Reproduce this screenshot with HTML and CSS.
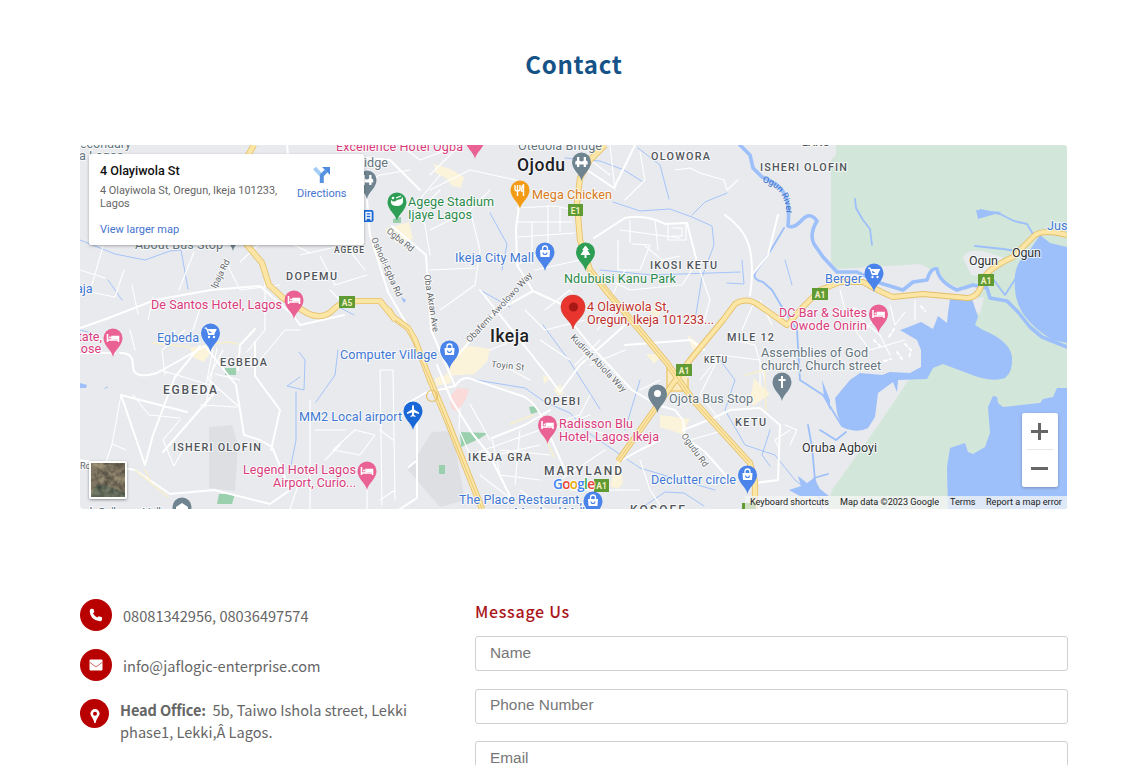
FILE: index.html
```html
<!DOCTYPE html>
<html lang="en">
<head>
<meta charset="utf-8">
<title>Contact</title>
<link rel="stylesheet" href="styles.css">
</head>
<body>
<main class="page">
<h1 class="title">Contact</h1>
<section class="map">
<svg class="map-canvas" viewBox="80 145 987 364" width="987" height="364">
<defs>
<path id="pin" d="M0 19C-1.2 12-9.5 8-9.5 0A9.5 9.5 0 0 1 9.5 0C9.5 8 1.2 12 0 19Z"/>
<g id="bed" fill="none" stroke="#fff" stroke-width="1.6"><path d="M-5.5-4V4M-5.5 2H5.5V4M5.5 2V-1.5H-1V1.5"/><circle cx="-3" cy="-.6" r="1" fill="#fff" stroke="none"/><path d="M-.5 0H5" stroke-width="2"/></g>
<g id="bag"><path d="M-5-2H5L4.5 5H-4.5Z" fill="#fff"/><path d="M-2.5-2V-3.5A2.5 2.5 0 0 1 2.5-3.5V-2" fill="none" stroke="#fff" stroke-width="1.3"/><path d="M-2 .5A2 2 0 0 0 2 .5" fill="none" stroke="#4a83ea" stroke-width="1.1"/></g>
<g id="cart"><path d="M-6-5H-4L-1.8 1.5H4M-3-3.5H5.5L3.5 .5H-2Z" fill="#fff" stroke="#fff" stroke-width="1.1"/><circle cx="-1.5" cy="4" r="1.2" fill="#fff"/><circle cx="3.5" cy="4" r="1.2" fill="#fff"/></g>
<g id="bridge" fill="#fff"><path d="M-4.500-5H-2.200V-1.500Q0 .5 2.200-1.500V-5H4.500V-1.500L6.200-.5V2.500H4.500V5H2.200V2.500H-2.200V5H-4.500V2.500H-6.200V-.5L-4.500-1.500Z"/></g>
<path id="river-name" d="M762 182Q782 186 786 208L788 228"/>
<filter id="terrain" x="0" y="0" width="1" height="1" color-interpolation-filters="sRGB"><feTurbulence type="fractalNoise" baseFrequency=".15" numOctaves="4" seed="8"/><feColorMatrix values=".5 .2 0 0 .12 .45 .2 0 0 .11 .35 .15 0 0 .11 0 0 0 0 1"/></filter>
</defs>
<rect x="80" y="145" width="987" height="364" fill="#e8eaed"/>
<path d="M209 427L232 425 238 445 235 491 209 488ZM432 432L452 431 465 500 440 507 408 470Z" fill="#dddfe3"/>
<path d="M836 145H1067V509H827L832 490 877 427 910 378 950 340 978 300 980 285 965 290 945 282 938 269 932 270 920 264 837 269 831 262V160L836 155Z" fill="#d2e6da"/>
<path d="M963 258Q966 249 982 251L1003 257 988 277 971 275ZM972 299L984 297 980 314 974 310Z" fill="#e8eaed"/>
<g fill="#9dbffa">
<path d="M900 330L917 340 921 350 921 367 910 373 890 372 882 375 860 373 850 380 835 398 837 413 842 427Q857 434 868 428L875 417 878 393 893 382 897 392 898 380 927 379 933 368 943 364 967 373Q990 383 1005 378 1013 372 1012 357 1010 341 983 330L975 325 978 317 972 299H950L948 313 947 323 938 316 933 329 921 322 906 328Z"/>
<path d="M1040 235L1050 243 1067 247V343L1053 340Q1035 330 1024 315 1013 300 1015 275 1017 260 1030 250Z"/>
<path d="M1067 388H1057L1053 397 1043 399 1040 403 1003 407 998 403 997 397 993 396 988 407 990 433 985 447 973 454 968 452 965 443 950 448 947 467 948 509H1067Z"/>
<path d="M976 210L1002 212 978 219ZM80 383L87 385 86 388H80ZM103 389L108 386 107 388ZM401 297L406 300 404 303ZM789 490L801 486 798 476 807 483 814 478 820 489 829 496H800ZM822 380L830 400 830 410 824 396Z"/>
</g>
<g fill="none" stroke="#9dbffa" stroke-linecap="round" stroke-linejoin="round">
<path d="M740 145L750 155 753 168 762 177Q780 184 785 195T788 226Q794 229 802 220T817 221Q809 234 814 244L823 257 837 272 857 272 880 283 903 290 913 282 927 280Q931 267 937 269 939 282 957 290L973 285 987 288 990 298 1007 301 1018 312 1030 327 1042 337 1067 347" stroke-width="3.6"/>
<path d="M980 210L1000 214 1014 221 1027 224 1034 236M975 246L1003 249 1023 252M855 199L856 208 863 220 870 229 872 245M990 275L1005 295 1016 278M784 228L771 250 757 270Q750 279 763 282L772 290 782 307 797 330 800 380 823 395 842 426M808 425L812 447 815 480 822 509M820 430L836 440 846 432M814 478L828 474" stroke-width="1.8"/>
<path d="M80 240L115 254 145 260 170 251 181 250 188 289M613 202L640 211 670 209 692 217 712 226 714 245 702 277 695 320M692 215L705 202 727 193M638 148L660 165 669 199M490 213L507 244 502 270M510 307L480 290M600 270L652 275 740 272M476 380L525 388 545 402 570 413 590 434 640 468 680 480 715 490M543 325L570 362 600 409M640 509L665 492 684 493 704 506M640 380L625 430M720 360L735 380 725 410 745 445 775 455 795 480 820 500M770 430L762 455 770 466M335 305L354 315M299 352L305 360 304 390 287 386 300 377M296 392V440L290 470M316 402L335 375 338 350M108 280L122 300M565 158L600 161 624 170 643 182M727 283L744 284 742 260M785 260L792 285M80 330L88 332" stroke-width=".9"/>
</g>
<path d="M225 368H236V375H225ZM219 494H235L232 504H217ZM460 432L488 433 479 439 461 447ZM529 407L536 406 538 412 531 414ZM439 465H445V474H439ZM393 219L401 217V223H393Z" fill="#9bd0ae"/>
<path d="M450 397L457 388 469 389 466 399 457 412 451 408Z" fill="#fbdada"/>
<path d="M190 348L209 344 214 347 204 362 194 358ZM434 164L450 169 464 177 461 188 452 186 446 178 436 173ZM385 229L409 222 413 239 397 243ZM449 353L470 346 490 349 487 362 474 374 447 376ZM435 378L450 374 451 383 436 386ZM660 415L690 419 682 434 660 427ZM646 354H663L654 364ZM543 375L550 378 544 384ZM554 390L560 384 564 393 558 396ZM619 455L623 483 618 489 610 486ZM644 305L661 312 656 320ZM687 335L702 346 693 350ZM754 378L770 394 753 406 750 400Z" fill="#fbf4da"/>
<g fill="none" stroke="#fff" stroke-linejoin="round" stroke-linecap="round">
<g stroke-width="2">
<path d="M80 328L106 319 155 300 211 290 260 286 293 315 300 325 344 315M287 145L289 165M344 156L390 160 420 190M367 200L370 235 388 292 410 330M392 226L426 255 431 330 455 386M455 386L425 393 406 404M455 386Q463 374 474 380L525 397Q538 405 545 425L556 450 565 470M437 365L451 399 472 433 489 454 511 498M520 200L516 228 517 265 533 291 568 307 574 325 590 345 632 390 657 405M533 291L495 312 458 355M480 290L516 335 546 373 560 392 580 365 625 325M120 353Q133 352 133 366T157 373L205 346 236 385 244 435 260 440 272 447M80 353H115M200 346L175 377 153 435 145 465 121 395 187 412M135 470L170 494 214 490 270 504 290 490 272 447M217 390L163 452M417 420V460L409 467M417 460V498L400 509M594 238L625 218Q645 214 665 224L687 223 697 262M725 215Q746 230 750 250T750 295M752 275L768 255 778 215M657 405L675 410 683 420 685 437 705 452 730 480M683 430L716 417 730 410 760 408 780 425 778 480 748 484M660 440L640 450 622 460M550 410L525 425 492 438M704 350L690 340 652 343 625 345M587 170L614 188 635 145M80 460L135 470M255 329L240 345 238 370M255 342V376L280 410 271 450"/>
</g>
<path stroke-width="1.1" d="M103 246L92 285M80 290L115 297 124 270M80 270L105 278M132 285L138 314M153 297L148 320M179 290L194 252M202 302L193 330M226 262L240 290 280 285M240 262L258 245M265 230L310 253M300 255L345 245 365 270M320 256L335 285 367 275M345 305L330 290M265 281V330L247 352M213 349L205 390M217 348L205 408M223 350L208 379 238 406M165 375L162 350 185 330M130 330L135 350M170 345L175 330M133 395L149 415 180 418M160 370L210 385M121 395L112 444 126 450M112 444L100 480M180 420L163 440 174 466 183 450M200 405L237 407M260 360L285 330H300M240 380L215 374M390 205H425L440 190M340 195L380 175 410 170M400 145L420 160 460 145M430 190L470 170 516 180 520 200M440 175L415 205 425 225 430 255M460 145L430 175M430 230L470 210 490 190M470 210L480 250 475 285 440 310M430 270L475 268M516 208L555 206 575 210M517 222H572M518 237L575 233M548 205V260M532 222V264M560 208V231M535 270L580 260M517 265L545 250M590 160L610 175M620 230L680 238M618 240V270L640 270 650 245 632 244M630 220V242M645 246L662 260 680 256M668 224V240H686V224M672 228H682V236H672M697 262L682 285 630 290 610 280M655 220L658 250M610 145L615 190M640 152L645 180 625 200M600 280L620 305 597 330M625 270L610 300M545 310L570 290 585 310M525 310L545 330 585 320M490 350L515 340M495 361L530 380M540 340L570 360M600 340L575 365M590 365L625 350M640 390L660 380M460 408L459 430M470 404L490 440M492 438L500 475 540 480M520 430L515 485M460 432L470 455 540 430M475 460L540 445M500 450L550 455M480 475L510 498M520 490L545 509M590 395L580 415 548 425M590 415L550 430M590 430L630 440M560 480L605 450M570 490H640M640 460L650 490 660 505M690 440L725 430M700 380L720 355 760 360 760 385M720 355L700 395 720 420M735 340L755 345 765 380M755 300L742 330M760 300L772 325M790 430L775 440 780 450M785 425L797 430 790 445M675 170L690 168 700 173 724 180 727 190 738 180M697 262L710 300 703 325M380 370L382 505M393 370L395 500M380 370H393M380 430L393 440M380 500L395 490M333 450L355 430 375 435 360 455ZM367 480V509M310 400V509M315 430L345 430M325 460L340 445M300 480L290 509M850 310L880 335 890 355M855 330L870 350M890 305L895 325 905 312M915 300V320M840 290L845 310M870 350L905 340"/>
<path stroke-width="1.4" stroke="#f8f0ca" d="M152 343L190 347M209 344L228 342 238 344M135 470L168 497M145 470L150 480M510 424L533 415M545 437L554 457M745 375L765 370 766 410"/>
<path d="M854 308L862 313M872 321L868 327M884 317L889 315M894 329L889 337M905 344L911 350 909 358M897 352L902 359M874 340L880 346M884 361L891 359M921 306L925 311" stroke-width="2" stroke-dasharray="3 3"/>
</g>
<g fill="none" stroke-linejoin="round">
<path d="M667 364V391H688V378" fill="#fbeabd" stroke="#efd28d" stroke-width="2"/>
<g stroke="#e5bf6a" stroke-width="6.200">
<path d="M605 145L590 160 580 178 577 203 580 240 590 270 608 293 637 327 667 363 693 400 720 430 750 463 755 482V509"/>
<path d="M254 145L247 157 232 215 247 245 262 263 269 285 283 298 307 313Q323 321 334 309 341 301 360 301H380L393 317 408 328 415 340 430 380 447 420 482 509M388 309L395 320"/>
<path d="M618 461L657 406 690 360 723 320 735 304Q747 296 760 306L787 325 803 307 820 290 840 282H863Q880 292 893 297L923 294 967 298Q979 298 983 280 987 269 1013 257L1033 237Q1041 228 1067 235" stroke-width="6"/>
</g>
<g stroke="#fce6a6" stroke-width="4.600">
<path d="M605 145L590 160 580 178 577 203 580 240 590 270 608 293 637 327 667 363 693 400 720 430 750 463 755 482V509"/>
<path d="M254 145L247 157 232 215 247 245 262 263 269 285 283 298 307 313Q323 321 334 309 341 301 360 301H380L393 317 408 328 415 340 430 380 447 420 482 509M388 309L395 320"/>
<path d="M618 461L657 406 690 360 723 320 735 304Q747 296 760 306L787 325 803 307 820 290 840 282H863Q880 292 893 297L923 294 967 298Q979 298 983 280 987 269 1013 257L1033 237Q1041 228 1067 235" stroke-width="4.2"/>
</g>
<path d="M395 320L408 329 430 380 482 509M590 270L637 327 667 363 693 400 750 463M618 461L657 406" stroke="#e5bf6a" stroke-width=".8"/>
<circle cx="432" cy="396" r="5.5" stroke="#e5bf6a" stroke-width="1.2"/>
</g>
<g class="shields">
<path d="M339 296H355V308H339ZM568 204H583V216H568ZM812 288H828V300H812ZM978 274H994V286H978ZM676 364H692V376H676ZM594 479H609V492H594ZM742 503H756V509H742Z" fill="#5f9a33"/>
<text x="347" y="305.500">A5</text><text x="575.500" y="213.500">E1</text><text x="820" y="297.500">A1</text><text x="986" y="283.500">A1</text><text x="684" y="373.500">A1</text><text x="601.500" y="489">A1</text>
</g>
<g class="pins">
<g fill="#ea6293"><use href="#pin" x="294" y="300"/><use href="#pin" x="113" y="338"/><use href="#pin" x="547.500" y="425"/><use href="#pin" x="367" y="471"/><use href="#pin" x="878.500" y="314"/><use href="#pin" x="475" y="140"/></g>
<use href="#bed" x="294" y="300"/><use href="#bed" x="113" y="338"/><use href="#bed" x="547.500" y="425"/><use href="#bed" x="367" y="471"/><use href="#bed" x="878.500" y="314"/>
<g fill="#4a83ea"><use href="#pin" x="545" y="252"/><use href="#pin" x="449.500" y="350"/><use href="#pin" x="747.500" y="475"/><use href="#pin" x="593" y="501"/><use href="#pin" x="210.500" y="333"/><use href="#pin" x="874" y="273"/></g>
<use href="#bag" x="545" y="252"/><use href="#bag" x="449.500" y="350"/><use href="#bag" x="747.500" y="475"/><use href="#bag" x="593" y="501"/><use href="#cart" x="210.500" y="333"/><use href="#cart" x="874" y="273"/>
<use href="#pin" x="413" y="411" fill="#1a67d8"/><path transform="translate(413 411)" d="M0-6Q1-6 1-4V-1.500L6 1.500V3L1 1.500V4L2.500 5V6L0 5.300-2.500 6V5L-1 4V1.500L-6 3V1.500L-1-1.500V-4Q-1-6 0-6Z" fill="#fff"/>
<g fill="#2f9e55"><use href="#pin" x="397" y="202"/><use href="#pin" x="585.500" y="252"/></g>
<path d="M391 200Q394 203 397 200L401 199 403 197 403 202Q402 206 397 206 392 206 391 203Z" fill="#fff"/><circle cx="393" cy="198" r="1.300" fill="#fff"/><path d="M396 198L401 196" stroke="#fff" stroke-width="1.300"/>
<path d="M585.500 245.500L589 250H587.500L590.500 255H586.500V258H584.500V255H580.500L583.500 250H582Z" fill="#fff"/>
<use href="#pin" x="520" y="190" fill="#f39b14"/><path d="M517.500 185V196M515 185V189Q515 191 517.500 191T520 189V185M523.500 196V185Q521.500 186 521.500 191H523.500" fill="none" stroke="#fff" stroke-width="1.400"/>
<g fill="#6f8490"><use href="#pin" x="581.500" y="162"/><use href="#pin" x="367" y="180"/><use href="#pin" x="657.500" y="394"/><use href="#pin" x="782" y="382"/><use href="#pin" x="182" y="507"/><use href="#pin" x="233" y="232"/></g>
<use href="#bridge" x="581.500" y="162"/><use href="#bridge" x="367" y="180"/><circle cx="657.500" cy="393.500" r="3.500" fill="#fff"/><path d="M782 376V388M778.500 380H785.500" stroke="#fff" stroke-width="2"/><path d="M176 507L182 503 188 507V509H176Z" fill="#fff"/>
<rect x="361" y="210" width="12.500" height="12" rx="2" fill="#1a67d8"/><path d="M366 212.500H371V218H366ZM366 220.500V218M371 220.500V218M366 215.200H371" fill="none" stroke="#fff" stroke-width="1.300"/>
<path d="M573 329C572 321 561 317 561 307A12 12 0 0 1 585 307C585 317 574 321 573 329Z" fill="#e8362e" stroke="#cf2a23" stroke-width=".6"/><circle cx="573.500" cy="307" r="4.600" fill="#a81916"/>
</g>
<g class="labels">
<g class="pink"><text x="336" y="151" textLength="127">Excellence Hotel Ogba</text><text x="151" y="309" textLength="131">De Santos Hotel, Lagos</text><text x="64" y="341">Estate,</text><text x="73" y="353">Rose</text><text x="559" y="428" textLength="74">Radisson Blu</text><text x="559" y="441" textLength="100">Hotel, Lagos Ikeja</text><text x="243" y="474" textLength="113">Legend Hotel Lagos</text><text x="273" y="487" textLength="83">Airport, Curio...</text><text x="779" y="317" textLength="88">DC Bar &amp; Suites</text><text x="790" y="330" textLength="77">Owode Onirin</text></g>
<g class="blue"><text x="455" y="262" textLength="79">Ikeja City Mall</text><text x="340" y="359" textLength="97">Computer Village</text><text x="157" y="342" textLength="42">Egbeda</text><text x="299" y="421" textLength="103">MM2 Local airport</text><text x="651" y="484" textLength="85">Declutter circle</text><text x="825" y="283" textLength="37">Berger</text><text x="1047" y="230">Jus</text><text x="459" y="504" textLength="123">The Place Restaurant,</text><text x="502" y="517" textLength="83">nt Maryland Mall</text><text x="76" y="293">aja</text></g>
<g class="green"><text x="408" y="205.500" textLength="86">Agege Stadium</text><text x="408" y="218.500" textLength="64">Ijaye Lagos</text><text x="564" y="283" textLength="112">Ndubuisi Kanu Park</text></g>
<text class="orange" x="532" y="199" textLength="80">Mega Chicken</text>
<g class="red"><text x="587" y="311" textLength="82">4 Olayiwola St,</text><text x="587" y="323.500" textLength="127">Oregun, Ikeja 101233...</text></g>
<g class="slate"><text x="518" y="150" textLength="84">Otedola Bridge</text><text x="364" y="167">idge</text><text x="80" y="148" textLength="51">econdary</text><text x="79" y="160">a Lagos</text><text x="135" y="249" textLength="88">About Bus Stop</text><text x="669" y="403" textLength="84">Ojota Bus Stop</text><text x="761" y="357" textLength="107">Assemblies of God</text><text x="761" y="370" textLength="120">church, Church street</text><text x="84" y="517" textLength="77">sh Gallamar Hall</text></g>
<g class="area"><text x="651" y="160" textLength="59">OLOWORA</text><text x="760" y="171" textLength="87">ISHERI OLOFIN</text><text x="650" y="269" textLength="67">IKOSI KETU</text><text x="286" y="280" textLength="51">DOPEMU</text><text x="220" y="365.500" textLength="47">EGBEDA</text><text x="173" y="451" textLength="88">ISHERI OLOFIN</text><text x="544" y="405" textLength="36">OPEBI</text><text x="468" y="461" textLength="63">IKEJA GRA</text><text x="727" y="341" textLength="47">MILE 12</text><text x="735" y="426" textLength="31">KETU</text><text x="802" y="146">LANU</text></g>
<g class="area small"><text x="334" y="253" textLength="30">AGEGE</text><text x="704" y="363" textLength="23">KETU</text></g>
<g class="area strong"><text x="163" y="394" textLength="54">EGBEDA</text><text x="544" y="475" textLength="78">MARYLAND</text><text x="630" y="513.500" textLength="55">KOSOFE</text></g>
<g class="city"><text x="517" y="171" textLength="48">Ojodu</text><text x="490" y="341.500" textLength="39">Ikeja</text></g>
<g class="town"><text x="969" y="265" textLength="29">Ogun</text><text x="1012" y="257" textLength="29">Ogun</text><text x="802" y="452" textLength="75">Oruba Agboyi</text></g>
<g class="street"><text transform="translate(386 232) rotate(39)" textLength="32">Ogba Rd</text><text transform="translate(371 239) rotate(66)" textLength="64">Oshodi-Egba Rd</text><text transform="translate(424 275) rotate(81)" textLength="58">Oba Akran Ave</text><text transform="translate(470 343) rotate(-47)" textLength="92">Obafemi Awolowo Way</text><text transform="translate(216 289) rotate(-63)" textLength="31">Ipaja Rd</text><text transform="translate(491 367) rotate(6)" textLength="33">Toyin St</text><text transform="translate(570 338) rotate(46)" textLength="76">Kudirat Abiola Way</text><text transform="translate(681 436) rotate(54)" textLength="39">Ogudu Rd</text><text x="80" y="469">Ro</text></g>
<text class="river"><textPath href="#river-name">Ogun River</textPath></text>
<text class="logo" x="553" y="489" textLength="42"><tspan fill="#4285f4">G</tspan><tspan fill="#ea4335">o</tspan><tspan fill="#e9ad05">o</tspan><tspan fill="#4285f4">g</tspan><tspan fill="#34a853">l</tspan><tspan fill="#ea4335">e</tspan></text>
</g>
</svg>
<div class="place-card">
<div class="place-info"><strong class="place-name">4 Olayiwola St</strong><span class="place-address">4 Olayiwola St, Oregun, Ikeja 101233,<br>Lagos</span><a class="map-link">View larger map</a></div>
<div class="directions"><svg width="18" height="18" viewBox="0 0 18 18"><path d="M1.500 2L8 9" stroke="#a3cdf2" stroke-width="4"/><path d="M8.800 17V9.500L13 5" fill="none" stroke="#5792e0" stroke-width="4"/><path d="M9 1H17V9Z" fill="#4f8ce0"/></svg><a class="directions-link">Directions</a></div>
</div>
<svg class="satellite" width="34" height="34"><rect width="34" height="34" filter="url(#terrain)"/><path d="M0 34Q2 16 20 24T34 28V34Z" fill="#385f52" opacity=".35"/></svg>
<div class="zoom-control"><span class="plus"></span><span class="divider"></span><span class="minus"></span></div>
<div class="credits"><span class="credit keyboard">Keyboard shortcuts</span><span class="credit data">Map data ©2023 Google</span><span class="credit terms">Terms</span><span class="credit report">Report a map error</span></div>
</section>
<div class="columns">
<ul class="details">
<li class="detail"><span class="badge"><svg width="14" height="14" viewBox="0 0 14 14"><path d="M2 .8L4.500 1 5.300 4.200 3.900 5.300Q5.200 8 8.400 9.500L9.700 8.200 13 9.300V11.700Q12.500 13.300 10.800 13.200 1.200 12 .7 3.200.7 1.500 2 .8Z" fill="#fff"/></svg></span><span class="detail-text">08081342956, 08036497574</span></li>
<li class="detail"><span class="badge"><svg width="14" height="12" viewBox="0 0 14 12"><rect x=".5" y=".5" width="13" height="11" rx="1" fill="#fff"/><path d="M.5 3L5.500 7Q7 8 8.500 7L13.500 3" fill="none" stroke="#c25050" stroke-width=".9"/></svg></span><span class="detail-text">info@jaflogic-enterprise.com</span></li>
<li class="detail office"><span class="badge compact"><svg width="10" height="14" viewBox="0 0 10 14"><path fill-rule="evenodd" d="M5 0A4.600 4.600 0 0 1 9.600 4.800C9.600 7 6 10 5.700 14H4.300C4 10 .4 7 .4 4.800A4.600 4.600 0 0 1 5 0ZM5 2.800A2 2 0 1 0 5 6.800 2 2 0 1 0 5 2.800Z" fill="#fff"/></svg></span><span class="detail-text"><b class="office-label">Head Office:</b>&nbsp; 5b, Taiwo Ishola street, Lekki<br>phase1, Lekki,Â Lagos.</span></li>
</ul>
<form class="message">
<h2 class="message-title">Message Us</h2>
<input class="field" placeholder="Name"><input class="field" placeholder="Phone Number"><input class="field" placeholder="Email">
</form>
</div>
</main>
</body>
</html>
```
FILE: styles.css
```css
* { box-sizing: border-box; }
body { margin: 0; height: 765px; overflow: hidden; background: #fff; color: #666; font-family: "Noto Sans CJK SC", sans-serif; }
.page { width: 988px; margin-left: 80px; padding-top: 44px; }
.title { margin: 0 0 61px; color: #145287; font-size: 24px; line-height: 40px; letter-spacing: .7px; text-align: center; }
.map { position: relative; width: 987px; height: 364px; overflow: hidden; border-radius: 4px; font-family: Roboto, sans-serif; }
.map-canvas { display: block; }
.labels text { paint-order: stroke; stroke: #fff; stroke-opacity: .75; stroke-width: 2px; stroke-linejoin: round; font-size: 12.6px; }
.pink { fill: #d93c7c; }
.blue { fill: #3f78d4; }
.green { fill: #2b8a4b; }
.orange { fill: #d77a20; }
.red { fill: #bf302d; }
.slate { fill: #64757e; }
.labels .area text { fill: #50555a; font-size: 10.8px; font-weight: 500; }
.labels .small text { font-size: 8.5px; }
.labels .strong text { font-size: 12px; }
.labels .city text { fill: #202124; font-size: 17.5px; font-weight: 500; }
.labels .town text { fill: #303336; font-size: 12.5px; }
.labels .street text { fill: #63676c; font-size: 9px; }
.labels .river { fill: #3570cb; font-size: 9px; stroke: none; }
.labels .logo { font-family: "Open Sans", sans-serif; font-size: 13.5px; font-weight: 600; }
.shields text { fill: #f2efc4; font-size: 8.5px; font-weight: 700; text-anchor: middle; }
.place-card { position: absolute; left: 9px; top: 9px; width: 275px; height: 91px; padding: 10px 17.5px 0 11px; display: flex; justify-content: space-between; background: #fff; border-radius: 2px; box-shadow: 0 1px 3px rgba(0,0,0,.3); }
.place-info { display: flex; flex-direction: column; white-space: nowrap; }
.place-name { color: #111; font-size: 12.6px; line-height: 14px; font-weight: 500; }
.place-address { margin-top: 6px; color: #666; font-size: 10.9px; line-height: 13px; }
.map-link { margin-top: 13px; color: #4674d0; font-size: 11px; line-height: 14px; }
.directions { display: flex; flex-direction: column; align-items: center; padding-top: 2px; color: #4674d0; font-size: 11px; line-height: 14px; }
.directions-link { margin-top: 3px; }
.satellite { position: absolute; left: 9px; top: 316px; width: 38px; height: 38px; border: 2px solid #fff; border-radius: 2px; box-shadow: 0 1px 3px rgba(0,0,0,.4); }
.zoom-control { position: absolute; left: 942px; top: 268px; width: 36px; height: 74px; display: flex; flex-direction: column; align-items: center; background: #fff; border-radius: 2px; box-shadow: 0 1px 3px rgba(0,0,0,.25); }
.plus { width: 17px; height: 17px; margin: 10px 1px 9px 0; background: linear-gradient(#666,#666) center / 17px 3px no-repeat, linear-gradient(#666,#666) center / 3px 17px no-repeat; }
.divider { width: 27px; height: 1px; background: #e6e6e6; }
.minus { width: 17px; height: 3px; margin: 17px 1px 0 0; background: #666; }
.credits { position: absolute; right: 0; bottom: 0; display: flex; height: 13px; color: #222; font-size: 9.1px; line-height: 13px; }
.credit { padding-left: 5px; background: rgba(245,245,245,.75); white-space: nowrap; }
.keyboard { width: 90px; }
.data { width: 110px; }
.terms { width: 36px; }
.report { width: 86px; }
.columns { display: flex; margin-top: 90px; }
.details { width: 395px; margin: 0; padding: 0; list-style: none; font-size: 14.6px; line-height: 22px; }
.detail { display: flex; height: 50px; }
.badge { flex: none; display: flex; align-items: center; justify-content: center; width: 32px; height: 32px; margin-right: 11px; border-radius: 50%; background: #b80000; }
.compact { width: 29px; height: 29px; padding-top: 4px; }
.detail-text { padding-top: 6px; white-space: nowrap; }
.office .detail-text { padding-top: 0; }
.office-label { letter-spacing: -.15px; }
.message { flex: 1; display: flex; flex-direction: column; }
.message-title { margin: 0 0 12px; color: #aa1519; font-size: 16px; line-height: 25px; font-weight: 500; letter-spacing: .7px; }
.field { flex: none; width: 593px; height: 35px; margin: 0 0 17.5px; padding: 0 14px 2px; border: 1px solid #d0d0d0; border-radius: 3px; color: #777; font: 15.4px "Liberation Sans", sans-serif; }
.field::placeholder { color: #777; }
```
